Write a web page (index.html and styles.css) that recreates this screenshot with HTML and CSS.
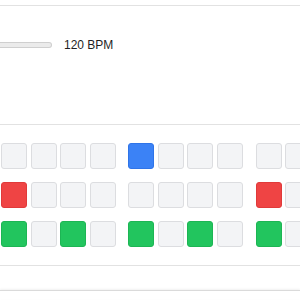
FILE: index.html
```html
<!DOCTYPE html>
<html lang="en">
<head>
    <meta charset="UTF-8">
    <meta name="viewport" content="width=device-width, initial-scale=1.0">
    <title>Step Sequencer</title>
    <link rel="stylesheet" href="styles.css">
</head>
<body>

<div class="panel">
    <div class="controls">
        <div class="tempo-track"></div>
        <span class="tempo-label">120 BPM</span>
    </div>

    <div class="grid">
        <div class="row">
            <div class="group">
                <div class="step"></div><div class="step"></div><div class="step"></div><div class="step"></div>
            </div>
            <div class="group">
                <div class="step on-blue"></div><div class="step"></div><div class="step"></div><div class="step"></div>
            </div>
            <div class="group">
                <div class="step"></div><div class="step"></div><div class="step"></div><div class="step"></div>
            </div>
        </div>
        <div class="row">
            <div class="group">
                <div class="step on-red"></div><div class="step"></div><div class="step"></div><div class="step"></div>
            </div>
            <div class="group">
                <div class="step"></div><div class="step"></div><div class="step"></div><div class="step"></div>
            </div>
            <div class="group">
                <div class="step on-red"></div><div class="step"></div><div class="step"></div><div class="step"></div>
            </div>
        </div>
        <div class="row">
            <div class="group">
                <div class="step on-green"></div><div class="step"></div><div class="step on-green"></div><div class="step"></div>
            </div>
            <div class="group">
                <div class="step on-green"></div><div class="step"></div><div class="step on-green"></div><div class="step"></div>
            </div>
            <div class="group">
                <div class="step on-green"></div><div class="step"></div><div class="step on-green"></div><div class="step"></div>
            </div>
        </div>
    </div>
</div>

<div class="footer-card"></div>

</body>
</html>
```

FILE: styles.css
```css
/* Base */
html {
    overflow: hidden;
}

body {
    margin: 0;
    width: 300px;
    height: 300px;
    overflow: hidden;
    background-color: #ffffff;
    font-family: "Liberation Sans", Arial, sans-serif;
}

.panel {
    margin-top: 5px;
    border-top: 1px solid #e2e2e2;
    border-bottom: 1px solid #e2e2e2;
}

/* Tempo row */
.controls {
    height: 119px;
    box-sizing: border-box;
    padding-top: 33px;
    border-bottom: 1px solid #e2e2e2;
    display: flex;
    align-items: flex-start;
    overflow: hidden;
}

.controls .tempo-track {
    flex-shrink: 0;
    width: 52px;
    height: 6px;
    margin-top: 3px;
    box-sizing: border-box;
    background-color: #ebebeb;
    border: 1px solid #cfcfcf;
    border-left: none;
    border-radius: 0 3px 3px 0;
}

.tempo-label {
    margin-left: 12px;
    font-size: 12px;
    line-height: 12px;
    color: #1f1f1f;
}

/* Step grid */
.grid {
    padding: 18px 0 18px 1px;
    display: flex;
    flex-direction: column;
    gap: 13px;
    overflow: hidden;
}

.row {
    display: flex;
    gap: 12.8px;
}

.group {
    display: flex;
    gap: 3.5px;
    flex-shrink: 0;
}

.step {
    flex-shrink: 0;
    width: 26px;
    height: 26px;
    box-sizing: border-box;
    background-color: #f3f4f6;
    border: 1px solid #dcdde0;
    border-radius: 3px;
}

.step.on-blue {
    background-color: #3b82f6;
    border-color: #2f74e8;
}

.step.on-red {
    background-color: #ef4444;
    border-color: #e03a3a;
}

.step.on-green {
    background-color: #22c55e;
    border-color: #1db554;
}

/* Next card, only its top edge shows */
.footer-card {
    margin-top: 24px;
    height: 8px;
    border-top: 1px solid #dadada;
    box-shadow: 0 -1px 2px rgba(0, 0, 0, 0.06);
}
```
